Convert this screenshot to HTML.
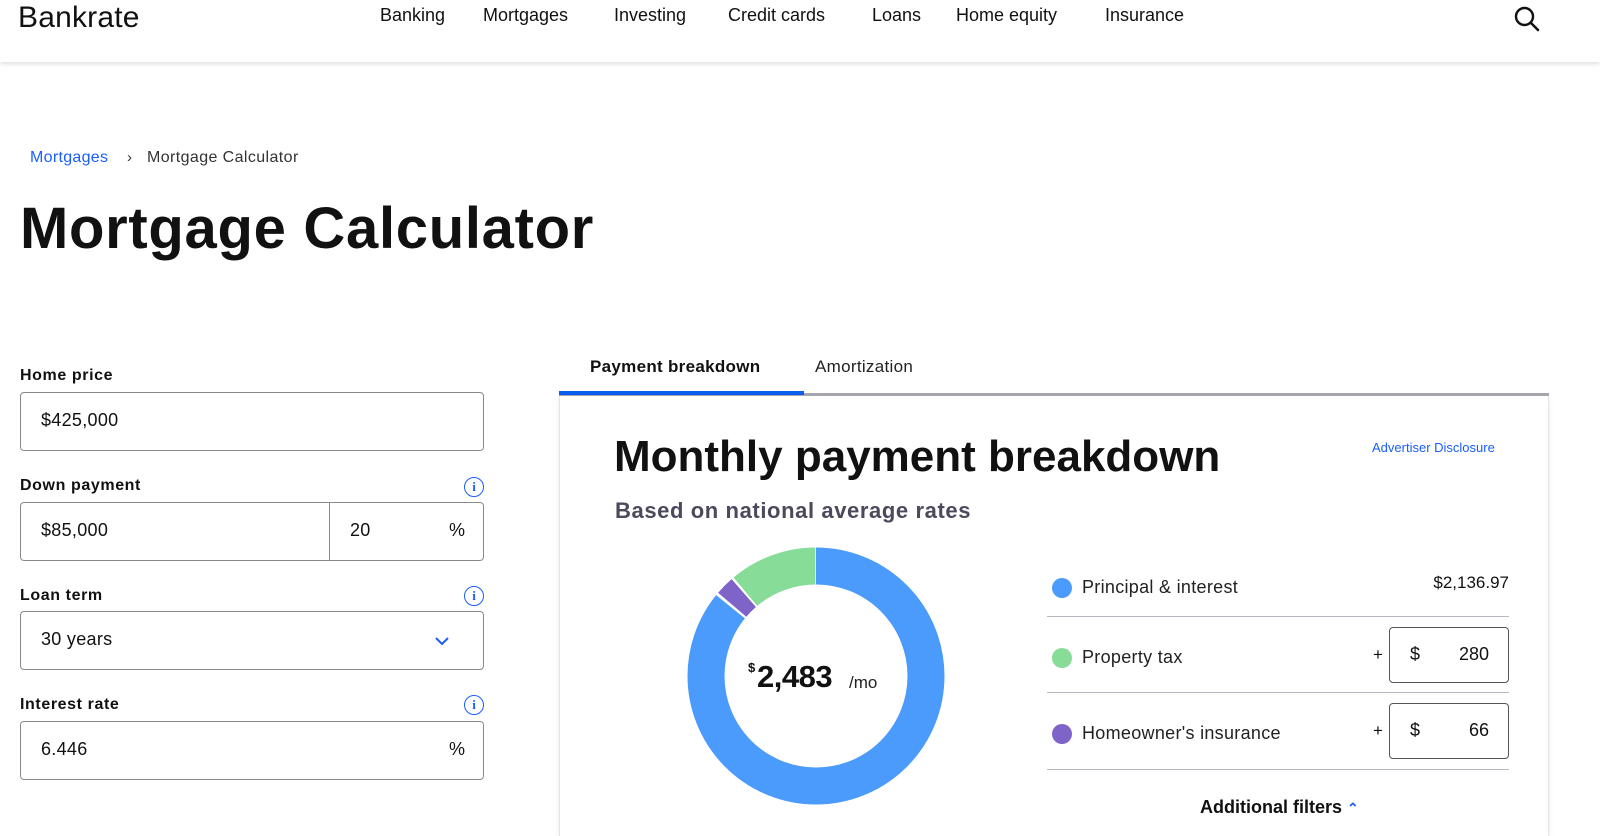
<!DOCTYPE html>
<html><head><meta charset="utf-8"><style>
*{margin:0;padding:0;box-sizing:border-box}
body{width:1600px;height:823px;overflow:hidden;background:#fff;font-family:"Liberation Sans",sans-serif;color:#111;position:relative}
.a{position:absolute;white-space:nowrap}
.nav{position:absolute;left:0;top:0;width:1600px;height:62px;background:#fff;box-shadow:0 2px 4px rgba(0,0,0,.12)}
.nav span{position:absolute;top:5px;font-size:18px;color:#111}
.lbl{position:absolute;left:20px;font-size:16px;font-weight:bold;color:#111;letter-spacing:0.6px}
.inp{position:absolute;left:20px;width:464px;height:59px;border:1px solid #8a8a8a;border-radius:4px;font-size:18px}
.inp span{position:absolute;top:17px;letter-spacing:0.3px}
.info{position:absolute;left:464px;width:20px;height:20px;border:1.6px solid #1a5eff;border-radius:50%;color:#1a5eff;font-size:13px;font-weight:bold;text-align:center;line-height:17px;font-family:"Liberation Serif",serif}
.dot{position:absolute;left:1052px;width:20px;height:20px;border-radius:50%}
.lt{position:absolute;left:1082px;font-size:18px;color:#222;letter-spacing:0.3px}
.hr{position:absolute;left:1047px;width:462px;height:1px;background:#b8b8c2}
.box{position:absolute;left:1389px;width:120px;height:56px;border:1px solid #555;border-radius:4px;font-size:18px}
</style></head><body>
<div class="nav">
<div class="a" style="left:18px;top:1px;font-size:30px;letter-spacing:0.2px;color:#111">Bankrate</div>
<span style="left:380px">Banking</span>
<span style="left:483px">Mortgages</span>
<span style="left:614px">Investing</span>
<span style="left:728px">Credit cards</span>
<span style="left:872px">Loans</span>
<span style="left:956px">Home equity</span>
<span style="left:1105px">Insurance</span>
<svg class="a" style="left:1513px;top:5px" width="28" height="28" viewBox="0 0 28 28"><circle cx="11.5" cy="11.5" r="8.5" fill="none" stroke="#111" stroke-width="2.4"/><path d="M18 18L25 25" stroke="#111" stroke-width="2.6" stroke-linecap="round"/></svg>
</div>
<div class="a" style="left:30px;top:149px;font-size:16px;color:#1a5eff;letter-spacing:0.3px">Mortgages</div>
<div class="a" style="left:127px;top:149px;font-size:15px;color:#333">›</div>
<div class="a" style="left:147px;top:149px;font-size:16px;color:#333;letter-spacing:0.4px">Mortgage Calculator</div>
<div class="a" style="left:20px;top:195px;font-size:58px;font-weight:bold;color:#111;letter-spacing:0.7px">Mortgage Calculator</div>

<div class="lbl" style="top:367px">Home price</div>
<div class="inp" style="top:392px"><span style="left:20px">$425,000</span></div>
<div class="lbl" style="top:477px">Down payment</div><div class="info" style="top:477px">i</div>
<div class="inp" style="top:502px"><span style="left:20px">$85,000</span><div style="position:absolute;left:308px;top:0;width:1px;height:57px;background:#8a8a8a"></div><span style="left:329px">20</span><span style="left:428px">%</span></div>
<div class="lbl" style="top:587px">Loan term</div><div class="info" style="top:586px">i</div>
<div class="inp" style="top:611px"><span style="left:20px">30 years</span><svg style="position:absolute;left:413px;top:23px" width="16" height="12"><path d="M2 3L8 9L14 3" fill="none" stroke="#1a5eff" stroke-width="2"/></svg></div>
<div class="lbl" style="top:696px">Interest rate</div><div class="info" style="top:695px">i</div>
<div class="inp" style="top:721px"><span style="left:20px">6.446</span><span style="left:428px">%</span></div>

<div class="a" style="left:590px;top:357px;font-size:17px;font-weight:bold;letter-spacing:0.3px">Payment breakdown</div>
<div class="a" style="left:815px;top:357px;font-size:17px;color:#222;letter-spacing:0.3px">Amortization</div>
<div class="a" style="left:559px;top:393px;width:990px;height:3px;background:#a8a8b2"></div>
<div class="a" style="left:559px;top:391px;width:245px;height:4px;background:#0a5ef0"></div>
<div class="a" style="left:559px;top:396px;width:990px;height:440px;border-left:1px solid #e4e4e8;border-right:1px solid #e4e4e8;box-shadow:0 2px 6px rgba(0,0,0,.08)"></div>
<div class="a" style="left:614px;top:432px;font-size:44px;font-weight:bold;color:#111">Monthly payment breakdown</div>
<div class="a" style="left:1372px;top:440px;font-size:13px;color:#1a5eff">Advertiser Disclosure</div>
<div class="a" style="left:615px;top:498px;font-size:22px;font-weight:bold;color:#4a4a5c;letter-spacing:0.6px">Based on national average rates</div>

<svg class="a" style="left:685px;top:545px" width="262" height="262" viewBox="0 0 262 262">
<g transform="rotate(-90 131 131)" fill="none" stroke-width="37">
<circle cx="131" cy="131" r="110" stroke="#4b9bfc" stroke-dasharray="593 2000" stroke-dashoffset="0"/>
<circle cx="131" cy="131" r="110" stroke="#7e63c8" stroke-dasharray="16.5 2000" stroke-dashoffset="-595.6"/>
<circle cx="131" cy="131" r="110" stroke="#87dc98" stroke-dasharray="76 2000" stroke-dashoffset="-614.2"/>
</g></svg>
<div class="a" style="left:748px;top:660px;font-size:13px;font-weight:bold">$</div>
<div class="a" style="left:757px;top:659px;font-size:31px;font-weight:bold;letter-spacing:-0.5px">2,483</div>
<div class="a" style="left:849px;top:673px;font-size:17px;color:#222">/mo</div>

<div class="dot" style="top:578px;background:#4b9bfc"></div><div class="lt" style="top:577px">Principal &amp; interest</div>
<div class="a" style="left:1400px;top:573px;width:109px;text-align:right;font-size:17px">$2,136.97</div>
<div class="hr" style="top:616px"></div>
<div class="dot" style="top:648px;background:#87dc98"></div><div class="lt" style="top:647px">Property tax</div>
<div class="a" style="left:1373px;top:645px;font-size:17px">+</div>
<div class="box" style="top:627px"><span class="a" style="left:20px;top:16px">$</span><span class="a" style="right:19px;top:16px">280</span></div>
<div class="hr" style="top:692px"></div>
<div class="dot" style="top:724px;background:#7e63c8"></div><div class="lt" style="top:723px">Homeowner's insurance</div>
<div class="a" style="left:1373px;top:721px;font-size:17px">+</div>
<div class="box" style="top:703px"><span class="a" style="left:20px;top:16px">$</span><span class="a" style="right:19px;top:16px">66</span></div>
<div class="hr" style="top:769px"></div>
<div class="a" style="left:1200px;top:797px;font-size:18px;font-weight:bold">Additional filters <span style="color:#1a5eff;font-size:14px">⌃</span></div>
</body></html>
